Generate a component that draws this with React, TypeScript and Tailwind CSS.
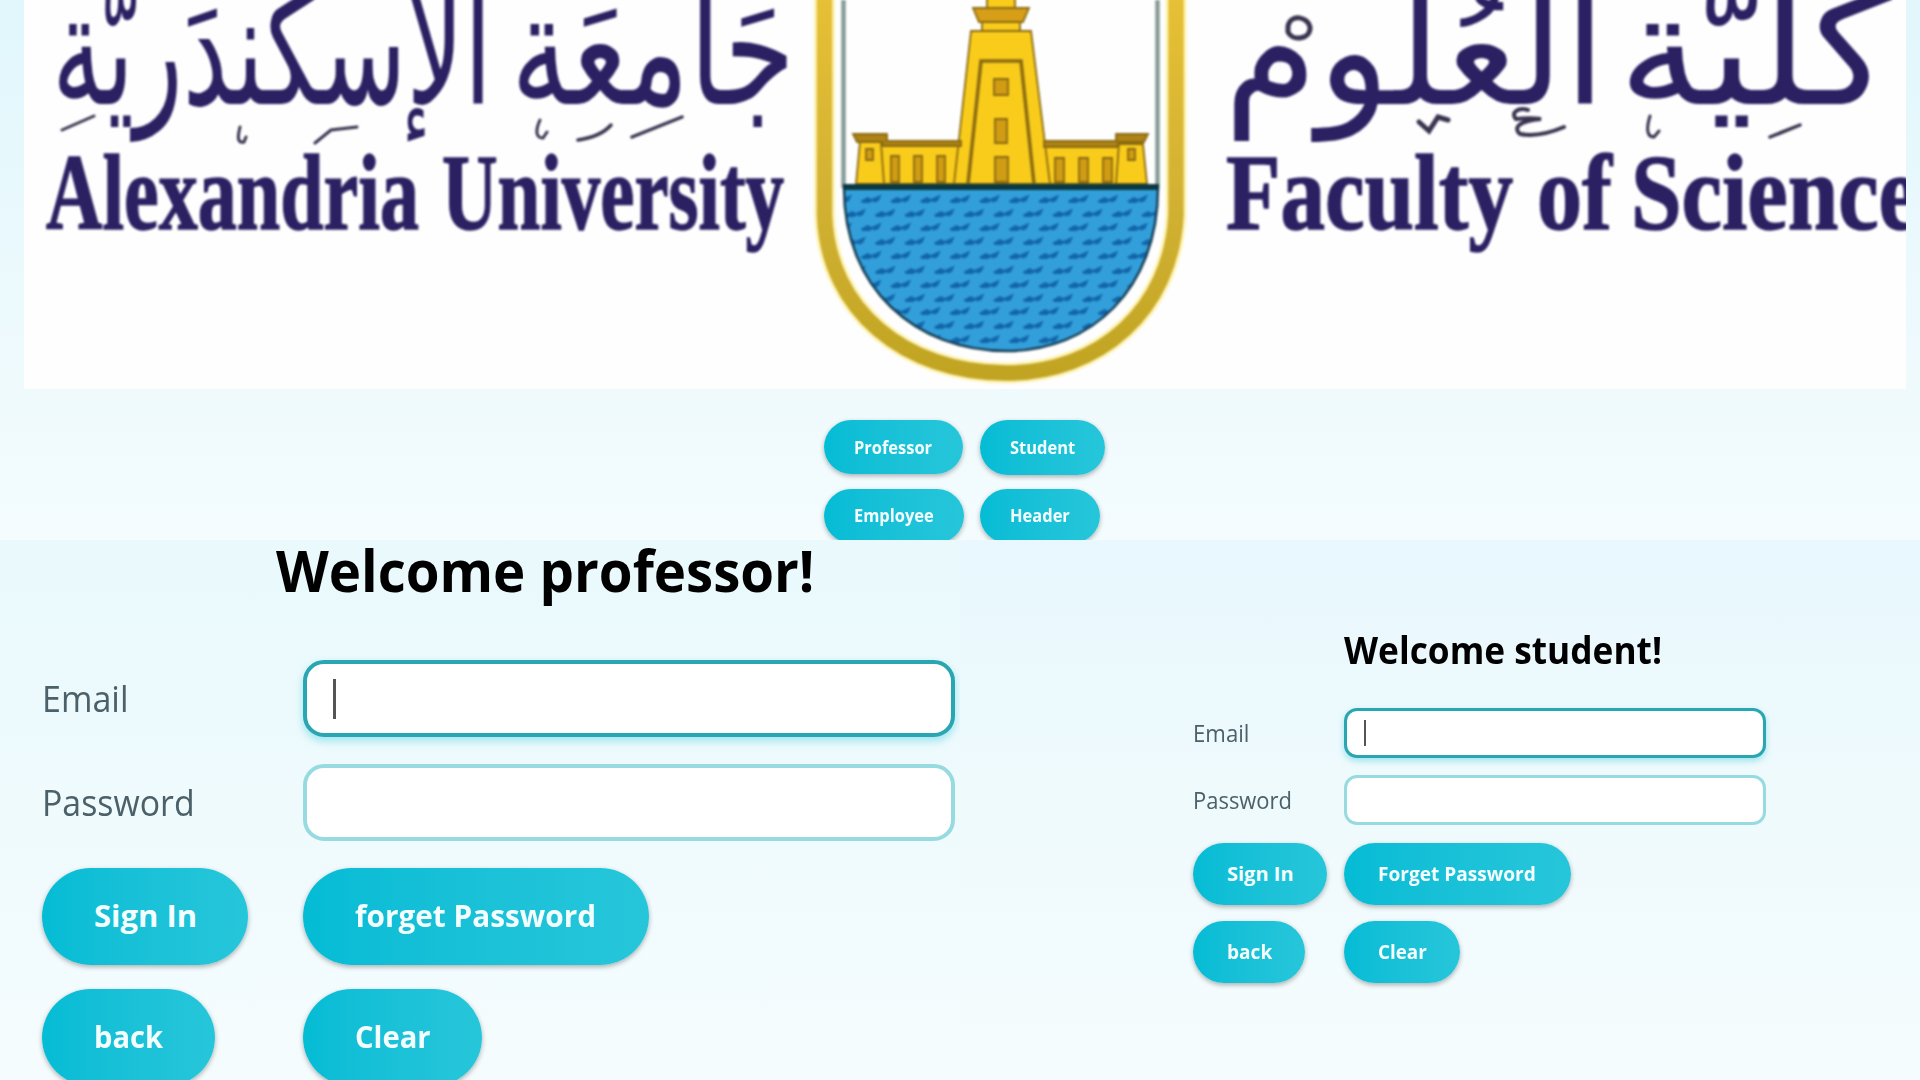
import type { ReactNode } from "react";

const FONT = "font-['Open_Sans','Noto_Sans',sans-serif]";

const WAVE_ROWS = [199, 213, 227, 241, 255, 270, 284, 298, 311, 325, 339];

const SHIELD = "M824.5 -5 V215 C828 310 905 373 1006 373 C1100 373 1171 310 1176 215 V-5";

const ARABIC = [
  { text: "جَامعَة", x: 795, width: 284 },
  { text: "الإسكَندَريَّة", x: 492, width: 440 },
  { text: "كليَّة", x: 1892, width: 274 },
  { text: "العُلوم", x: 1606, width: 382 },
];

const LATIN = [
  { text: "Alexandria", x: 46, width: 373 },
  { text: "University", x: 442, width: 342 },
  { text: "Faculty", x: 1226, width: 287 },
  { text: "of", x: 1537, width: 75 },
  { text: "Science", x: 1631, width: 288 },
];

function Logo() {
  return (
    <svg viewBox="24 0 1882 389" className="block h-[389px] w-[1882px] shrink-0 bg-[#fefefe]">
      <defs>
        <clipPath id="sea">
          <path d="M844 188 H1158 C1158 290 1090 351 1007 351 C915 351 844 288 844 188Z" />
        </clipPath>
        <linearGradient id="gold" x1="0" y1="0" x2="0" y2="389" gradientUnits="userSpaceOnUse">
          <stop offset="0" stopColor="#e6c035" />
          <stop offset="0.5" stopColor="#d3b233" />
          <stop offset="1" stopColor="#c0a321" />
        </linearGradient>
      </defs>
      <g className="blur-[0.9px]">
        <g fill="#2b2062" fontFamily="DejaVu Sans, sans-serif" fontSize="156">
          {ARABIC.map((word) => (
            <text key={word.text} x={word.x} y="104" direction="rtl" textLength={word.width} lengthAdjust="spacingAndGlyphs">
              {word.text}
            </text>
          ))}
        </g>
        {/* Ornamental strokes of the calligraphy */}
        <g fill="none" stroke="#39334f" strokeWidth="3" strokeLinecap="round">
          <path d="M62 130 L94 116 M315 143 L331 130 L357 127" />
          <path d="M632 137 L682 117 M578 140 C592 138 604 133 611 125 M1770 137 L1800 125" strokeWidth="3.500" />
          <path d="M240 127 C237 139 238 143 244 142 L246 137 M540 120 C535 131 536 138 543 138 L547 132 M1650 116 C1646 129 1647 137 1654 137 L1659 131" />
          <path d="M1528 110 C1518 107 1510 113 1516 119 C1525 118 1534 118 1541 119 C1518 121 1513 128 1520 134 C1536 137 1550 133 1564 127" strokeWidth="4" />
          <path d="M1419 122 L1429 131 L1438 117 L1448 120" strokeWidth="5" />
          <path d="M1288 26 C1291 13 1308 17 1310 27 C1311 39 1293 42 1288 32Z" strokeWidth="5" />
        </g>
        <g fill="#2b2062" stroke="#2b2062" strokeWidth="1.500" fontFamily="Liberation Serif, serif" fontWeight="700" fontSize="108">
          {LATIN.map((word) => (
            <text key={word.text} x={word.x} y="229" textLength={word.width} lengthAdjust="spacingAndGlyphs">
              {word.text}
            </text>
          ))}
        </g>
        <path d={SHIELD} fill="none" stroke="#fdf3b4" strokeWidth="21" />
        <path d={SHIELD} fill="none" stroke="url(#gold)" strokeWidth="15.500" />
        <path d="M843.500 0 V188 M1157.500 0 V188" stroke="#879c96" strokeWidth="4.500" />
        <g stroke="#8a6a10" strokeWidth="1.800" fill="#f9cc1c">
          <path d="M987 -4 V9 H1015 V-4Z M982 9 H1020 V32 H982Z" />
          <path d="M973 8 H1029 L1023 22 H979Z" fill="#d79f18" />
          <path d="M856 184 L860 141 H962 V184Z M1042 184 V144 H1143 L1147 184Z" />
          <path d="M954 184 L971 31 H1031 L1050 184Z" />
          <path d="M968 184 L981 61 H1021 L1034 184" fill="none" strokeWidth="3.500" />
          <path d="M853 134 H887 V141 H961 V146 H883 V142 H857Z M1148 134 H1116 V141 H1044 V147 H1118 V142 H1144Z" fill="#ae8214" />
          <path d="M881 143 L884 184 M1119 143 L1116 184" />
          <g fill="#cf9c13">
            <path d="M994 79 H1008 V95 H994Z M995 119 H1007 V143 H995Z M995 157 H1008 V182 H995Z" />
            <path d="M866 149 H873 V160 H866Z M1128 149 H1135 V160 H1128Z" />
            <path d="M891 156 H899 V182 H891Z M914 156 H922 V182 H914Z M937 156 H945 V182 H937Z M1055 158 H1064 V182 H1055Z M1079 158 H1088 V182 H1079Z M1103 158 H1112 V182 H1103Z" />
          </g>
        </g>
        <g clipPath="url(#sea)">
          <rect x="840" y="184" width="322" height="170" fill="#329fdb" />
          {WAVE_ROWS.map((y, row) =>
            Array.from({ length: 12 }, (_, i) => (
              <path
                key={`${y}-${i}`}
                d="M-11 2 L-4 -2 L0 0 L10 -4.500 L7 2 L3 3.500 L1 2 L-2 4 H-9Z"
                transform={`translate(${(row % 2 ? 856 : 842) + i * 29.6} ${y})`}
                fill="#1265a8"
              />
            )),
          )}
        </g>
        <path d="M844 188 C844 288 915 351 1007 351 C1090 351 1158 290 1158 188" fill="none" stroke="#173f56" strokeWidth="2.500" />
        <path d="M843 187 H1159" stroke="#0c3840" strokeWidth="6" />
      </g>
    </svg>
  );
}

function Pill({ className, fit = "scale-x-[0.94]", children }: { className: string; fit?: string; children: ReactNode }) {
  return (
    <button
      className={`flex items-center whitespace-nowrap rounded-full bg-linear-to-r from-[#04bcd5] to-[#26c6da] font-bold text-[#f4feff] shadow-[0_2px_5px_rgba(0,0,0,0.3)] ${className}`}
    >
      <span className={`inline-block origin-left ${fit}`}>{children}</span>
    </button>
  );
}

export default function App() {
  return (
    <div className={`flex h-[1080px] w-[1920px] flex-col overflow-hidden ${FONT}`}>
      <header className="flex h-[540px] flex-col overflow-hidden bg-linear-to-b from-[#e1f7fc] via-[#effafd] via-70% to-[#f4fcfe] pl-6">
        <Logo />
        <div className="mt-[31px] grid grid-cols-[156px_auto] justify-start gap-y-3.5 pl-[800px] text-[17.5px]">
          <Pill className="h-[54px] w-[139px] pl-[30px]">Professor</Pill>
          <Pill className="h-[55px] w-[125px] pl-[30px]">Student</Pill>
          <Pill className="h-[54px] w-[140px] pb-px pl-[30px]">Employee</Pill>
          <Pill className="h-[54px] w-[120px] pb-px pl-[30px]">Header</Pill>
        </div>
      </header>
      <main className="flex h-[540px]">
        <section className="h-[540px] w-[960px] overflow-hidden bg-linear-to-b from-[#e9f9fc] to-[#f5fcfe] pl-[42px]">
          <h1 className="ml-[234px] h-[120px] origin-left scale-x-[0.941] text-[58px] font-bold leading-[59px] text-black">
            Welcome professor!
          </h1>
          <div className="grid grid-cols-[261px_652px] items-center gap-y-[27px] text-[37px] text-[#4b6068]">
            <label className="origin-left scale-x-[0.92] pb-0.5">Email</label>
            <div className="flex h-[77px] items-center rounded-[21px] border-4 border-[#2aa6b3] bg-white pl-[26px] shadow-[0_4px_8px_rgba(0,188,212,0.35)]">
              <div className="h-10 w-[3px] bg-[#555]" />
            </div>
            <label className="origin-left scale-x-[0.915] pb-0.5">Password</label>
            <div className="h-[77px] rounded-[21px] border-4 border-[#97dbe1] bg-white" />
          </div>
          <div className="mt-[27px] grid grid-cols-[261px_auto] justify-start gap-y-6 text-[31px] leading-[46px]">
            <Pill className="h-[97px] w-[206px] pb-1 pl-[52px]" fit="scale-x-100">Sign In</Pill>
            <Pill className="h-[97px] w-[346px] pb-1 pl-[52px]" fit="scale-x-[0.96]">forget Password</Pill>
            <Pill className="h-[97px] w-[173px] pb-1 pl-[52px]">back</Pill>
            <Pill className="h-[97px] w-[179px] pb-1 pl-[52px]">Clear</Pill>
          </div>
        </section>
        <section className="h-[540px] w-[960px] overflow-hidden bg-linear-to-b from-[#e8f8fe] via-[#effafc] via-50% to-[#f5fcfe] pl-[233px] pt-[82px]">
          <h1 className="ml-[151px] h-[86px] origin-left scale-x-[0.953] text-[37px] font-bold leading-[56px] text-black">
            Welcome student!
          </h1>
          <div className="grid grid-cols-[151px_422px] items-center gap-y-[17px] text-[24px] text-[#4b6068]">
            <label className="origin-left scale-x-[0.925]">Email</label>
            <div className="flex h-[50px] items-center rounded-[13px] border-[3px] border-[#2aa6b3] bg-white pl-[17px] shadow-[0_3px_6px_rgba(0,188,212,0.35)]">
              <div className="h-[26px] w-[2px] bg-[#555]" />
            </div>
            <label className="origin-left scale-x-[0.915]">Password</label>
            <div className="h-[50px] rounded-[13px] border-[3px] border-[#97dbe1] bg-white" />
          </div>
          <div className="mt-[18px] grid grid-cols-[151px_auto] justify-start gap-y-4 text-[20px]">
            <Pill className="h-[62px] w-[134px] pl-[34px]" fit="scale-x-100">Sign In</Pill>
            <Pill className="h-[62px] w-[227px] pl-[34px]" fit="scale-x-[0.955]">Forget Password</Pill>
            <Pill className="h-[62px] w-[112px] pl-[34px]" fit="scale-x-[0.955]">back</Pill>
            <Pill className="h-[62px] w-[116px] pl-[34px]">Clear</Pill>
          </div>
        </section>
      </main>
    </div>
  );
}
